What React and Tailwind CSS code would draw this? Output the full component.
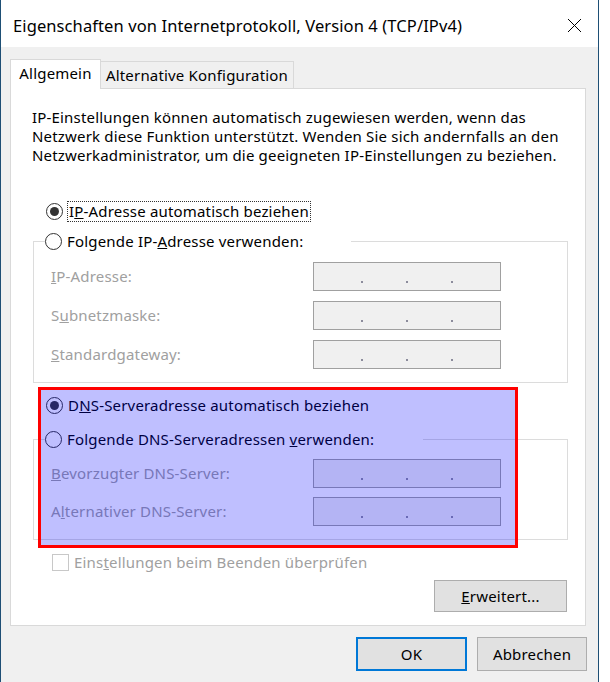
import React from "react";

const font = { fontFamily: '"Noto Sans", "Open Sans", sans-serif' };

const Radio = ({ checked }) => (
  <span className="w-[17px] h-[17px] rounded-full border border-[#333333] bg-white flex items-center justify-center shrink-0">
    {checked && <span className="w-[9px] h-[9px] rounded-full bg-[#333333]" />}
  </span>
);

const IpField = () => (
  <div className="w-[188px] h-[29px] border border-[#a0a0a0] bg-[#f0f0f0] flex justify-center gap-[43px] pt-[18px] shrink-0">
    <span className="w-[2px] h-[2px] bg-[#8c8c9c]" />
    <span className="w-[2px] h-[2px] bg-[#8c8c9c]" />
    <span className="w-[2px] h-[2px] bg-[#8c8c9c]" />
  </div>
);

const FieldRow = ({ children }) => (
  <div className="flex items-center">
    <div className="w-[262px] text-[#a0a0a0]">{children}</div>
    <IpField />
  </div>
);

const App = () => {
  return (
    <div className="relative w-[610px] h-[682px] bg-white overflow-hidden text-[15px] leading-[19px] tracking-[0.18px] text-black" style={font}>
      <div className="w-[599px] h-[682px] border-x border-[#1e4f75] flex flex-col">
        {/* Title bar */}
        <div className="h-[47px] bg-white flex items-center justify-between pl-[12px] pr-[16px] pt-[3px]">
          <span className="text-[16.5px] tracking-[0.1px] text-black">Eigenschaften von Internetprotokoll, Version 4 (TCP/IPv4)</span>
          <svg width="15" height="15" viewBox="0 0 15 15">
            <path d="M1 1 L14 14 M14 1 L1 14" stroke="#000" strokeWidth="1" fill="none" />
          </svg>
        </div>

        {/* Body */}
        <div className="flex-1 bg-[#f0f0f0] pl-[9px] pt-[12px]">
          {/* Tabs */}
          <div className="flex items-end h-[29px]">
            <div className="relative z-10 w-[91px] h-[30px] -mb-[1px] bg-white border-x border-t border-[#d9d9d9] flex items-center justify-center pb-[2px]">
              Allgemein
            </div>
            <div className="w-[193px] h-[27px] bg-[#f0f0f0] border-t border-r border-[#d9d9d9] flex items-center justify-center">
              Alternative Konfiguration
            </div>
          </div>

          {/* Panel */}
          <div className="w-[576px] h-[538px] bg-white border border-[#d9d9d9] pl-[21px] pt-[19px]">
            <div className="w-[536px] flex flex-col">
              <p className="leading-[19px]">
                IP-Einstellungen können automatisch zugewiesen werden, wenn das
                <br />
                Netzwerk diese Funktion unterstützt. Wenden Sie sich andernfalls an den
                <br />
                Netzwerkadministrator, um die geeigneten IP-Einstellungen zu beziehen.
              </p>

              {/* IP radio */}
              <div className="mt-[36px] ml-[14px] h-[20px] flex items-center gap-[4px]">
                <Radio checked />
                <span className="border border-dotted border-[#333333] px-[1px] leading-[19px]">
                  I<span className="underline">P</span>-Adresse automatisch beziehen
                </span>
              </div>

              <fieldset className="mt-[10px] ml-[1px] w-[535px] border border-[#dcdcdc] pt-[11px] pb-[13px]">
                <legend className="ml-[11px] w-[306px] h-[20px] flex items-center gap-[5px] bg-white">
                  <Radio />
                  <span>
                    Folgende IP-<span className="underline">A</span>dresse verwenden:
                  </span>
                </legend>
                <div className="pl-[17px] flex flex-col gap-[10px]">
                  <FieldRow>
                    <span className="underline">I</span>P-Adresse:
                  </FieldRow>
                  <FieldRow>
                    S<span className="underline">u</span>bnetzmaske:
                  </FieldRow>
                  <FieldRow>
                    <span className="underline">S</span>tandardgateway:
                  </FieldRow>
                </div>
              </fieldset>

              {/* DNS radio */}
              <div className="mt-[12px] ml-[14px] h-[20px] flex items-center gap-[5px]">
                <Radio checked />
                <span>
                  D<span className="underline">N</span>S-Serveradresse automatisch beziehen
                </span>
              </div>

              <fieldset className="mt-[14px] ml-[1px] w-[535px] border border-[#dcdcdc] pt-[10px] pb-[13px]">
                <legend className="ml-[11px] w-[378px] h-[20px] flex items-center gap-[5px] bg-white">
                  <Radio />
                  <span>
                    Folgende DNS-Serveradressen <span className="underline">v</span>erwenden:
                  </span>
                </legend>
                <div className="pl-[17px] flex flex-col gap-[9px]">
                  <FieldRow>
                    <span className="underline">B</span>evorzugter DNS-Server:
                  </FieldRow>
                  <FieldRow>
                    A<span className="underline">l</span>ternativer DNS-Server:
                  </FieldRow>
                </div>
              </fieldset>

              {/* Checkbox */}
              <div className="mt-[13px] ml-[20px] h-[18px] flex items-center gap-[5px] text-[#a0a0a0]">
                <span className="w-[17px] h-[17px] border border-[#c8c8c8] bg-white shrink-0" />
                <span>
                  Eins<span className="underline">t</span>ellungen beim Beenden überprüfen
                </span>
              </div>

              <button className="self-end mr-[1px] mt-[9px] w-[133px] h-[32px] bg-[#e1e1e1] border border-[#adadad]">
                <span className="underline">E</span>rweitert...
              </button>
            </div>
          </div>

          {/* Dialog buttons */}
          <div className="mt-[11px] pr-[11px] flex justify-end gap-[10px]">
            <button className="w-[111px] h-[34px] bg-[#e1e1e1] border-2 border-[#0078d7]">OK</button>
            <button className="w-[110px] h-[34px] bg-[#e1e1e1] border border-[#adadad]">Abbrechen</button>
          </div>
        </div>
      </div>

      {/* Highlight overlay */}
      <div className="absolute left-[38px] top-[387px] w-[480px] h-[161px] border-[3px] border-[#ff0000] bg-[rgba(0,0,255,0.25)]" />
    </div>
  );
};

export default App;
